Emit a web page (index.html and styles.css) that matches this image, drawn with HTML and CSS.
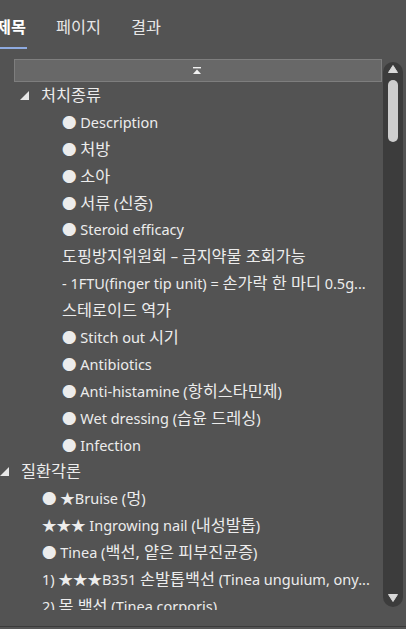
FILE: index.html
```html
<!DOCTYPE html>
<html lang="ko">
<head>
<meta charset="utf-8">
<title>목차</title>
<link rel="stylesheet" href="styles.css">
</head>
<body>
<div class="tabs">
  <div class="tab active">제목</div>
  <div class="tab">페이지</div>
  <div class="tab">결과</div>
</div>
<div class="panel">
  <div class="main">
    <div class="collapse-bar">
      <svg width="8" height="7" viewBox="0 0 8 7"><rect x="0" y="0" width="8" height="1.4" fill="#f2f2f2"/><polygon points="4,2.4 8,7 0,7" fill="#f2f2f2"/></svg>
    </div>
    <ul class="tree">
      <li class="group nested">
        <div class="row"><span class="exp"><svg width="9" height="9" viewBox="0 0 9 9"><polygon points="9,0 9,9 0,9" fill="#e8e8e8"/></svg></span><span class="ko">처치종류</span></div>
        <ul class="children">
          <li class="row">● Description</li>
          <li class="row">● <span class="ko">처방</span></li>
          <li class="row">● <span class="ko">소아</span></li>
          <li class="row">● <span class="ko">서류</span> (<span class="ko">신중</span>)</li>
          <li class="row">● Steroid efficacy</li>
          <li class="row"><span class="ko">도핑방지위원회</span> – <span class="ko">금지약물 조회가능</span></li>
          <li class="row">- 1FTU(finger tip unit) = <span class="ko">손가락 한 마디</span> 0.5g...</li>
          <li class="row"><span class="ko">스테로이드 역가</span></li>
          <li class="row">● Stitch out <span class="ko">시기</span></li>
          <li class="row">● Antibiotics</li>
          <li class="row">● Anti-histamine (<span class="ko">항히스타민제</span>)</li>
          <li class="row">● Wet dressing (<span class="ko">습윤 드레싱</span>)</li>
          <li class="row">● Infection</li>
        </ul>
      </li>
      <li class="group">
        <div class="row"><span class="exp"><svg width="9" height="9" viewBox="0 0 9 9"><polygon points="9,0 9,9 0,9" fill="#e8e8e8"/></svg></span><span class="ko">질환각론</span></div>
        <ul class="children">
          <li class="row">● ★Bruise (<span class="ko">멍</span>)</li>
          <li class="row">★★★ Ingrowing nail (<span class="ko">내성발톱</span>)</li>
          <li class="row">● Tinea (<span class="ko">백선, 얕은 피부진균증</span>)</li>
          <li class="row">1) ★★★B351 <span class="ko">손발톱백선</span> (Tinea unguium, ony...</li>
          <li class="row">2) <span class="ko">몸 백선</span> (Tinea corporis)</li>
        </ul>
      </li>
    </ul>
  </div>
  <div class="scrollbar">
    <svg class="arrow" width="10" height="8" viewBox="0 0 10 8"><path d="M5 0.5 L9.5 7.5 L0.5 7.5 Z" fill="#d9d9d9" stroke="#d9d9d9" stroke-linejoin="round"/></svg>
    <div class="thumb"></div>
    <div class="spacer"></div>
    <svg class="arrow" width="10" height="8" viewBox="0 0 10 8"><path d="M0.5 0.5 L9.5 0.5 L5 7.5 Z" fill="#d9d9d9" stroke="#d9d9d9" stroke-linejoin="round"/></svg>
  </div>
</div>
<div class="footer"></div>
</body>
</html>
```

FILE: styles.css
```css
html, body {
  margin: 0;
  padding: 0;
}
body {
  width: 406px;
  height: 629px;
  overflow: hidden;
  background: #535353;
  color: #ececec;
  font-family: "Noto Sans", "Noto Sans CJK KR", sans-serif;
  font-size: 14.5px;
}
.tabs {
  display: flex;
  gap: 28px;
  margin-left: -5px;
  height: 49px;
}
.tab {
  padding: 17px 1px 10px;
  line-height: 20px;
  font-size: 16.3px;
  color: #e6e6e6;
  border-bottom: 2px solid transparent;
}
.tab.active {
  color: #ffffff;
  font-weight: bold;
  border-bottom-color: #8eaae0;
}
.panel {
  display: flex;
  padding-top: 10px;
  height: 551px;
}
.main {
  width: 382px;
  display: flex;
  flex-direction: column;
}
.collapse-bar {
  margin-left: 14px;
  height: 21px;
  background: #686868;
  border: 1px solid #7e7e7e;
  display: flex;
  align-items: center;
  justify-content: center;
  padding-right: 2px;
}
.tree {
  list-style: none;
  margin: 0;
  padding: 0;
  height: 528px;
  overflow: hidden;
}
.tree ul {
  list-style: none;
  margin: 0;
}
.group.nested {
  margin-left: 20px;
}
.children {
  padding-left: 42px;
}
.row {
  height: 26.9px;
  line-height: 26.9px;
  white-space: nowrap;
  overflow: hidden;
  text-overflow: ellipsis;
  display: block;
}
.row .exp {
  display: inline-block;
  width: 21px;
  vertical-align: top;
  padding-top: 9px;
  line-height: 0;
}
.ko {
  font-size: 16.3px;
  line-height: 1;
}
.scrollbar {
  margin: 3px 0 0 1px;
  width: 20px;
  height: 545px;
  background: #3c3c3c;
  border-radius: 10px;
  display: flex;
  flex-direction: column;
  align-items: center;
  padding: 3px 0 5px;
  box-sizing: border-box;
}
.thumb {
  margin-top: 7px;
  width: 10px;
  height: 62px;
  border-radius: 5px;
  background: #cecece;
}
.spacer {
  flex: 1;
}
.footer {
  margin-top: 16px;
  border-top: 1px solid #3b3b3b;
  height: 2px;
  background: #555555;
}
```
